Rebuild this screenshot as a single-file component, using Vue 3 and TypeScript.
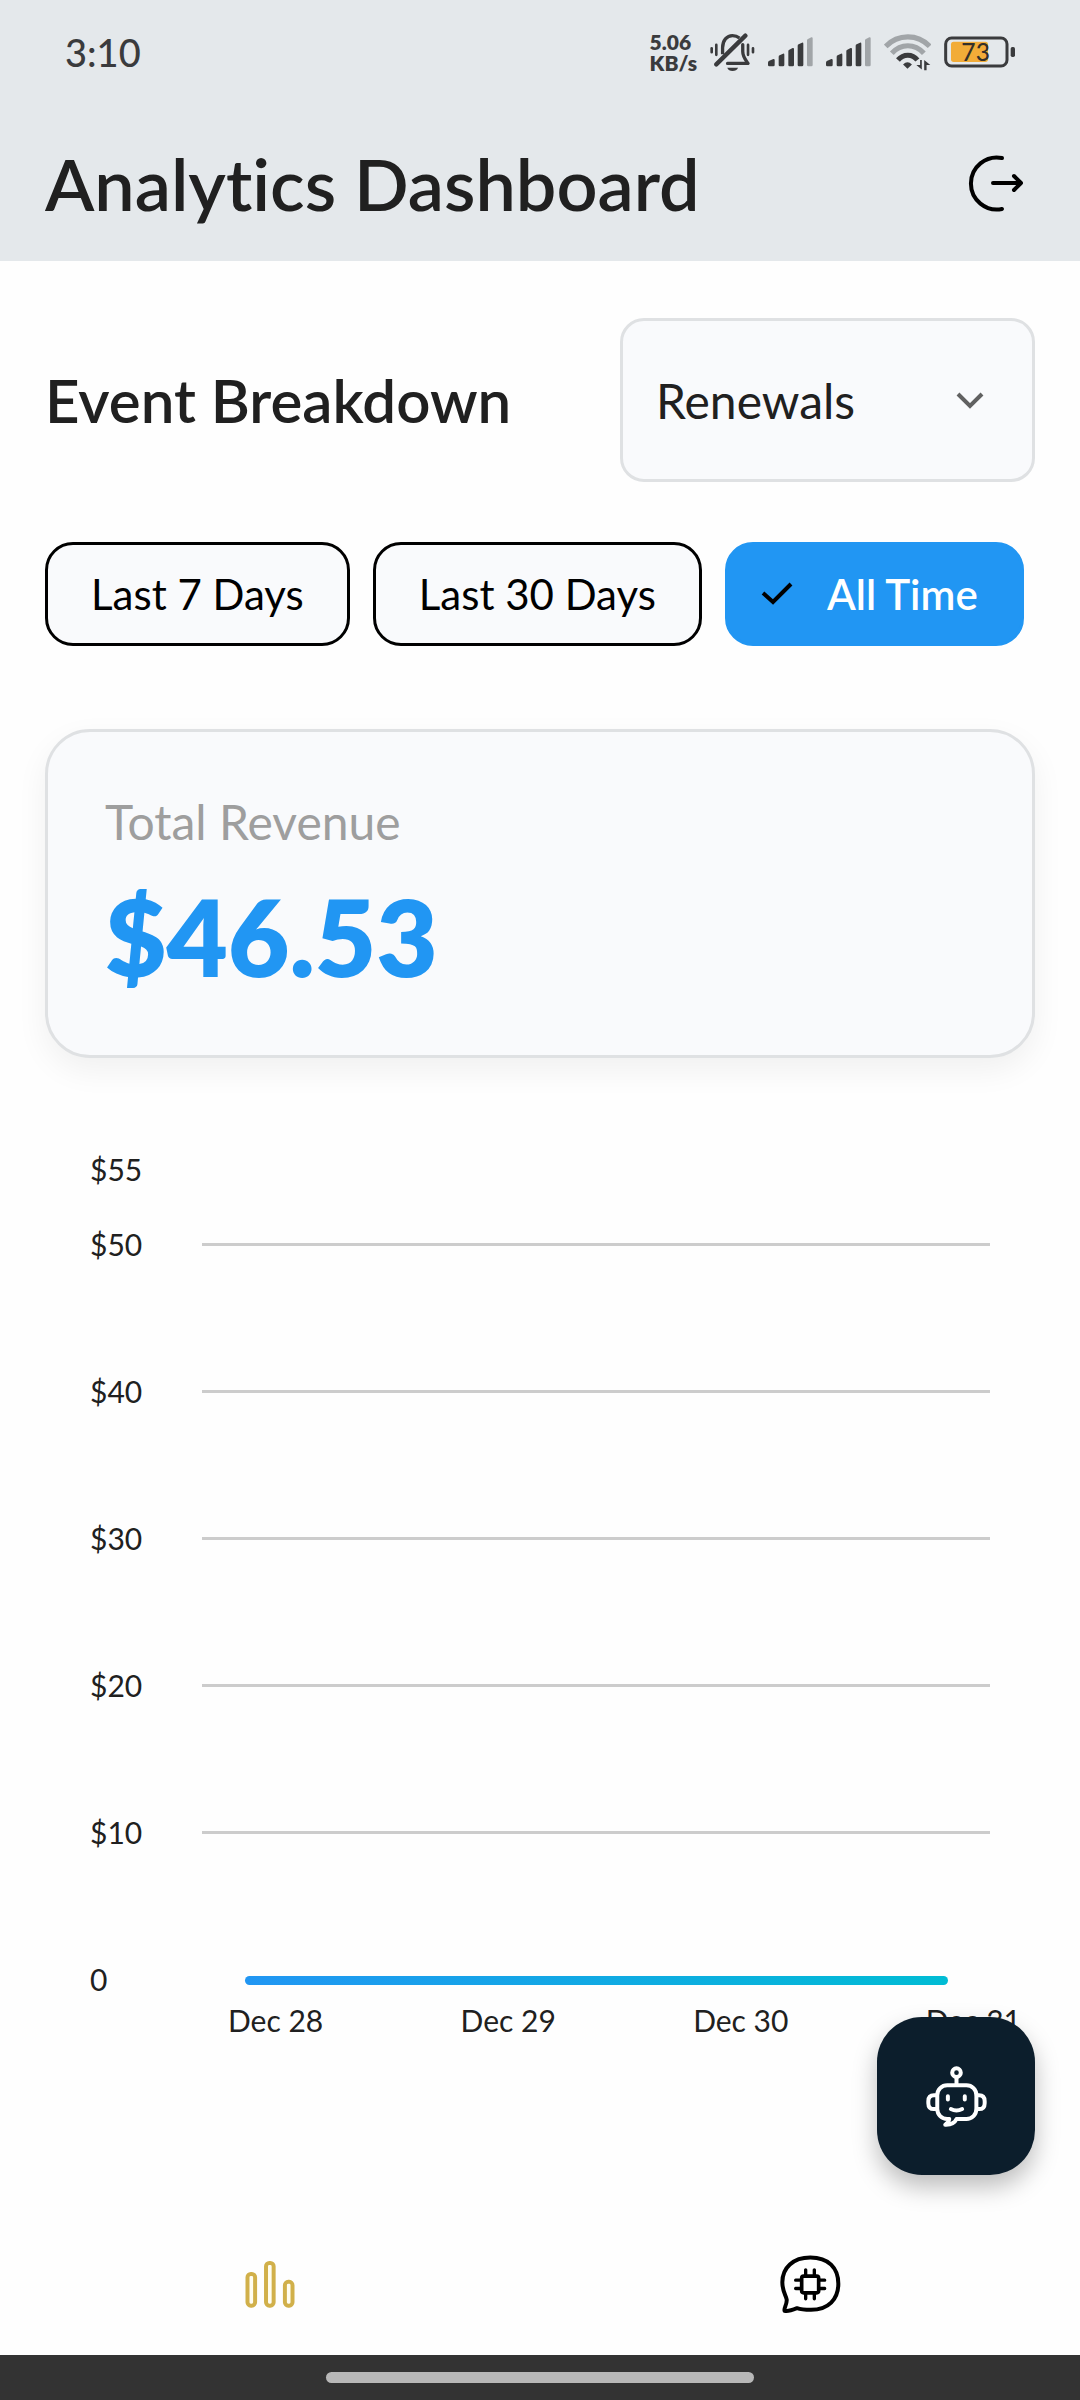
<script setup lang="ts">
import { ref } from 'vue'

interface Tick {
  label: string
  kind: 'cap' | 'line' | 'series'
}

const eventTypes: string[] = ['Renewals', 'Purchases', 'Refunds']
const selectedEvent = ref<string>('Renewals')

const ranges: string[] = ['Last 7 Days', 'Last 30 Days', 'All Time']
const activeRange = ref<string>('All Time')

const ticks: Tick[] = [
  { label: '$55', kind: 'cap' },
  { label: '$50', kind: 'line' },
  { label: '$40', kind: 'line' },
  { label: '$30', kind: 'line' },
  { label: '$20', kind: 'line' },
  { label: '$10', kind: 'line' },
  { label: '0', kind: 'series' },
]
const days: string[] = ['Dec 28', 'Dec 29', 'Dec 30', 'Dec 31']
</script>

<template>
  <div class="screen">
    <header class="top">
      <div class="status">
        <span class="clock">3:10</span>
        <div class="indicators">
          <div class="speed">
            <span>5.06</span>
            <span>KB/s</span>
          </div>
          <svg class="bell" viewBox="238 68 136 118" fill="none" stroke="#3a3b3d" stroke-width="10" stroke-linecap="round" stroke-linejoin="round" aria-hidden="true">
            <path d="M257 163 345 76" stroke-width="13" />
            <path d="M276 132V113C276 90 289 76 306 76C315 76 322 79 327 83" stroke-linecap="butt" />
            <path d="M337 103V124C337 140 346 150 353 160H291" />
            <path d="M290 173H323C320 180 314 183 306 183S293 180 290 173Z" fill="#3a3b3d" stroke="none" />
            <path d="M257 104V134M243 114V126M353 104V134M368 114V126" stroke-width="8" />
          </svg>
          <svg v-for="n in 2" :key="n" class="signal" viewBox="414 82 135 90" fill="#3a3b3d" aria-hidden="true">
            <path d="M414 158Q414 155 418 153L430 148Q434 147 434 151V166Q434 170 430 170H418Q414 170 414 166Z" />
            <path d="M446 141Q446 138 449 137L459 132Q463 131 463 135V166Q463 170 459 170H450Q446 170 446 166Z" />
            <path d="M475 124Q475 121 478 120L488 115Q492 114 492 118V166Q492 170 488 170H479Q475 170 475 166Z" />
            <path d="M503 108Q503 105 506 104L516 99Q520 98 520 102V166Q520 170 516 170H507Q503 170 503 166Z" />
            <path d="M531 92Q531 89 534 88L544 83Q548 82 548 86V166Q548 170 544 170H535Q531 170 531 166Z" fill="#a1a5a8" />
          </svg>
          <svg class="wifi" viewBox="758 74 138 108" fill="none" stroke-width="15" aria-hidden="true">
            <path d="M763 110Q790 82 828 82T892 110" stroke="#a1a5a8" />
            <path d="M781 130Q801 108 828 108T875 130" stroke="#a1a5a8" />
            <path d="M799 150Q811 136 828 136T856 150" stroke="#3a3b3d" />
            <path d="M814 163Q827 150 840 163L827 176Z" fill="#3a3b3d" />
            <path d="M869 150V178L853 165H864V150ZM876 180V150L894 165H883V180Z" fill="#3a3b3d" />
          </svg>
          <svg class="battery" viewBox="942 76 213 96" aria-hidden="true">
            <rect x="963" y="93" width="111" height="61" rx="8" fill="#f2ac38" />
            <rect x="947" y="82" width="184" height="84" rx="18" fill="none" stroke="#3a3b3d" stroke-width="9" />
            <rect x="1142" y="109" width="13" height="30" rx="5" fill="#3a3b3d" />
            <text x="1037" y="151" text-anchor="middle" font-size="74" font-weight="500" fill="#34302a">73</text>
          </svg>
        </div>
      </div>
      <div class="titlebar">
        <h1>Analytics Dashboard</h1>
        <button class="logout" type="button" aria-label="Log out">
          <svg viewBox="0 0 72 72" fill="none" stroke="#000" stroke-width="4" stroke-linecap="round" stroke-linejoin="round">
            <path d="M41 11A26 26 0 1 0 41 62" />
            <path d="M32 36H60M53 29L60 36L53 43" />
          </svg>
        </button>
      </div>
    </header>

    <main>
      <div class="filter">
        <h2><label for="event-type">Event Breakdown</label></h2>
        <div class="picker">
          <select id="event-type" v-model="selectedEvent">
            <option v-for="e in eventTypes" :key="e">{{ e }}</option>
          </select>
          <svg class="chevron" viewBox="0 0 28 18" fill="none" stroke="#616161" stroke-width="4" aria-hidden="true">
            <path d="M2 2L14 14L26 2" />
          </svg>
        </div>
      </div>

      <div class="ranges">
        <button
          v-for="r in ranges"
          :key="r"
          type="button"
          class="chip"
          :class="{ active: r === activeRange }"
          :aria-pressed="r === activeRange"
          @click="activeRange = r"
        >
          <svg v-if="r === activeRange" viewBox="0 0 32 24" fill="none" stroke="#000" stroke-width="4" aria-hidden="true">
            <path d="M2 11L12 20L30 2" />
          </svg>
          {{ r }}
        </button>
      </div>

      <section class="card">
        <span class="caption">Total Revenue</span>
        <strong>$46.53</strong>
      </section>

      <section class="chart" aria-label="Revenue over time">
        <div v-for="t in ticks" :key="t.label" class="tick" :class="t.kind">
          <span>{{ t.label }}</span>
          <i></i>
        </div>
        <div class="days">
          <span v-for="d in days" :key="d">{{ d }}</span>
        </div>
      </section>

      <button class="assistant" type="button" aria-label="Assistant">
        <svg viewBox="0 0 184 184" fill="none" stroke="#fff" stroke-width="12" stroke-linecap="round" stroke-linejoin="round">
          <circle cx="92" cy="20" r="13" />
          <path d="M92 34V56" />
          <path d="M70 160H64A30 30 0 0 1 34 130V88A30 30 0 0 1 64 58H122A30 30 0 0 1 152 88V130A30 30 0 0 1 122 160H92Q84 178 58 177Q68 171 70 160" />
          <path d="M33 88H24Q7 88 7 106V112Q7 130 24 130H33M153 88H160Q177 88 177 106V112Q177 130 160 130H153" />
          <path d="M66 91V101M117 91V101" />
          <path d="M75 130Q92 139 109 130" />
        </svg>
      </button>
    </main>

    <nav>
      <a href="#analytics" aria-label="Analytics">
        <svg class="bars" viewBox="0 0 150 142" fill="#fffdf0" stroke="#d1b04a" stroke-width="12">
          <rect x="7" y="39" width="23" height="96" rx="10" />
          <rect x="63" y="6" width="23" height="129" rx="10" />
          <rect x="120" y="63" width="23" height="72" rx="10" />
        </svg>
      </a>
      <a href="#ai-chat" aria-label="AI chat">
        <svg class="bubble" viewBox="90 105 183 176" fill="none" stroke="#000" stroke-width="12" stroke-linecap="round" stroke-linejoin="round">
          <path d="M141 264C152 268 165 269 183 269C235 269 265 237 265 191C265 143 235 112 181 112C129 112 97 143 97 186C97 214 108 226 110 238C112 252 99 268 104 272C113 275 129 269 141 264Z" />
          <rect x="155" y="168" width="51" height="50" rx="6" stroke-width="11" />
          <path d="M167 149V165M193 149V165M167 221V236M193 221V236M137 180H152M137 205H152M209 180H224M209 205H224" stroke-width="10" />
        </svg>
      </a>
    </nav>
    <footer><span></span></footer>
  </div>
</template>

<style>
body {
  margin: 0;
  background: #fefefe;
}
</style>

<style scoped>
.screen {
  min-height: 100vh;
  display: flex;
  flex-direction: column;
  background: #fefefe;
  color: #202020;
  font-family: Lato, 'Noto Sans', sans-serif;
  font-variant-ligatures: none;
}
* {
  box-sizing: border-box;
}
svg {
  display: block;
}
button,
select {
  font: inherit;
  color: inherit;
  cursor: pointer;
}
h1,
h2 {
  margin: 0;
  font-weight: 600;
}

.top {
  background: #e4e8eb;
}
.status {
  height: 104px;
  padding: 0 65px;
  display: flex;
  align-items: center;
  justify-content: space-between;
  color: #3a3b3d;
}
.clock {
  font-size: 38px;
  font-weight: 500;
}
.indicators {
  display: flex;
  align-items: center;
  gap: 13px;
}
.speed {
  display: flex;
  flex-direction: column;
  font-size: 21px;
  line-height: 21px;
  font-weight: 800;
}
.bell {
  width: 45px;
  height: 39px;
}
.signal {
  width: 45px;
  height: 30px;
}
.wifi {
  width: 47px;
  height: 37px;
}
.battery {
  width: 71px;
  height: 32px;
}
.titlebar {
  height: 157px;
  padding: 0 47px 0 45px;
  display: flex;
  align-items: center;
  justify-content: space-between;
}
h1 {
  font-size: 72px;
  line-height: 80px;
}
.logout {
  padding: 0;
  border: 0;
  background: none;
}
.logout svg {
  width: 72px;
  height: 72px;
}

main {
  position: relative;
  flex: 1;
  padding: 57px 45px 0;
}
.filter {
  display: flex;
  align-items: center;
  justify-content: space-between;
}
h2 {
  font-size: 60px;
}
.picker {
  position: relative;
  width: 415px;
}
select {
  appearance: none;
  width: 100%;
  height: 164px;
  padding: 0 33px;
  border: 3px solid #dfe1e3;
  border-radius: 24px;
  background: #f9fafc;
  font-size: 48px;
}
.chevron {
  position: absolute;
  right: 51px;
  top: 74px;
  width: 28px;
  height: 18px;
  pointer-events: none;
}

.ranges {
  margin-top: 60px;
  display: flex;
  gap: 23px;
}
.chip {
  display: flex;
  align-items: center;
  gap: 34px;
  height: 104px;
  padding: 0 43px;
  border: 3px solid #000;
  border-radius: 28px;
  background: #f9fafc;
  color: #000;
  font-size: 42px;
}
.chip svg {
  width: 32px;
  height: 24px;
}
.chip.active {
  padding: 0 43px 0 33px;
  border-color: #2196f3;
  background: #2196f3;
  color: #fff;
  font-weight: 600;
}

.card {
  margin-top: 83px;
  height: 329px;
  padding: 60px 57px;
  display: flex;
  flex-direction: column;
  border: 3px solid #dfe1e3;
  border-radius: 45px;
  background: #f9fafc;
  box-shadow: 0 12px 32px rgba(0, 0, 0, 0.06);
}
.caption {
  font-size: 48px;
  line-height: 60px;
  color: #9e9e9e;
}
strong {
  font-size: 106px;
  line-height: 112px;
  margin-top: 28px;
  font-weight: 800;
  color: #2196f3;
}

.chart {
  margin: 95px 45px 0;
  font-size: 30px;
  line-height: 32px;
}
.tick {
  display: flex;
  height: 147px;
}
.tick span {
  width: 112px;
}
.tick i {
  flex: 1;
  height: 3px;
  margin-top: 15px;
  background: #cccccc;
}
.tick.cap {
  height: 75px;
}
.tick.cap i {
  background: none;
}
.tick.series {
  height: 32px;
}
.tick.series i {
  height: 9px;
  margin: 13px 42px 0 43px;
  border-radius: 5px;
  background: linear-gradient(90deg, #2196f3, #00bcd4);
}
.days {
  display: flex;
  justify-content: space-between;
  margin: 9px -31px 0 138px;
}

.assistant {
  position: absolute;
  right: 45px;
  bottom: 45px;
  width: 158px;
  height: 158px;
  display: grid;
  place-items: center;
  border: 0;
  border-radius: 45px;
  background: #0c1e2c;
  box-shadow: 0 12px 24px rgba(0, 0, 0, 0.26);
}
.assistant svg {
  width: 61px;
  height: 61px;
}

nav {
  height: 135px;
  padding-bottom: 6px;
  display: flex;
}
nav a {
  flex: 1;
  display: grid;
  place-items: center;
}
.bars {
  width: 50px;
  height: 47px;
}
.bubble {
  width: 61px;
  height: 59px;
}
footer {
  height: 45px;
  display: flex;
  align-items: center;
  justify-content: center;
  background: #333333;
}
footer span {
  width: 428px;
  height: 11px;
  border-radius: 6px;
  background: #b8b8b8;
}
</style>
